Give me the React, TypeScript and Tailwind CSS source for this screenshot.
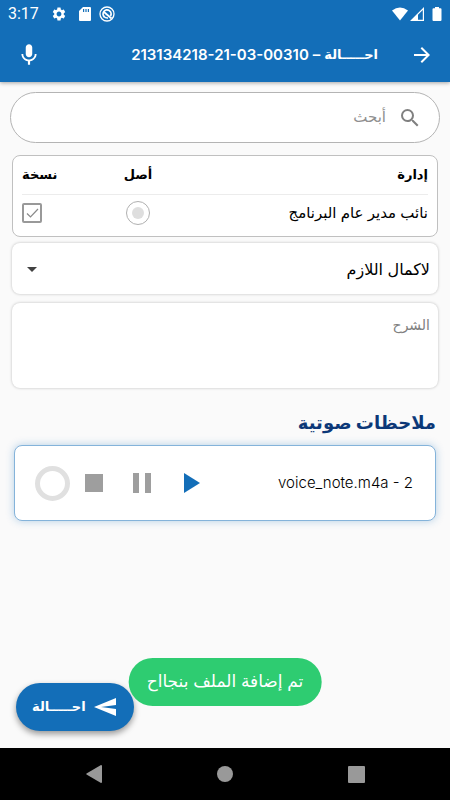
import React, { useState } from "react";
import {
  MdArrowDropDown,
  MdArrowForward,
  MdMic,
  MdSearch,
  MdSettings,
} from "react-icons/md";

const StatusBar = () => {
  return (
    <div
      dir="ltr"
      className="flex h-7 items-center justify-between px-2 font-[Roboto,sans-serif] text-white"
    >
      <div className="flex items-center gap-3">
        <span className="text-base">3:17</span>
        <MdSettings className="size-4" />
        <svg viewBox="0 0 12 14" className="h-3.5 w-3">
          <path
            fill="currentColor"
            fillRule="evenodd"
            d="M4 0H11Q12 0 12 1V13Q12 14 11 14H1Q0 14 0 13V4ZM4 2V5H5.2V2ZM6.4 2V5H7.6V2ZM8.8 2V5H10V2Z"
          />
        </svg>
        <svg viewBox="0 0 16 16" className="-ml-1 size-4" fill="none" stroke="currentColor">
          <circle cx="8" cy="8" r="7" strokeWidth="1.3" />
          <path d="M5.5 11A4 4 0 1 1 11.5 10" strokeWidth="1.8" />
          <path d="M5 6L12.5 12.5" strokeWidth="1.8" />
          <path d="M5 10.5Q6.5 12.2 9 12" strokeWidth="1.6" />
        </svg>
      </div>
      <div className="flex items-center">
        <svg viewBox="0 0 16 13" className="h-3.5 w-4">
          <path fill="currentColor" d="M0 3Q8 -3 16 3L8 13Z" />
        </svg>
        <svg viewBox="0 0 14 14" className="ml-0.5 size-3.5">
          <path fill="currentColor" fillRule="evenodd" d="M14 0V14H0ZM12.8 3V12.8H8V7.8Z" />
        </svg>
        <svg viewBox="0 0 9 14" className="ml-2 h-3.5 w-2.5">
          <path
            fill="currentColor"
            d="M2.5 0H6.5V1.3H8Q9 1.3 9 2.3V13Q9 14 8 14H1Q0 14 0 13V2.3Q0 1.3 1 1.3H2.5Z"
          />
        </svg>
      </div>
    </div>
  );
};

const Header = () => {
  return (
    <header className="relative bg-[#136eb8] text-white shadow-[0_1px_4px_rgba(0,0,0,0.35)]">
      <StatusBar />
      <div className="flex h-[54px] items-center justify-between px-4">
        <button type="button" aria-label="رجوع">
          <MdArrowForward className="size-6" />
        </button>
        <h1 className="flex flex-1 items-center gap-1 pr-8 text-[15px] font-semibold">
          <span className="text-[13px] font-bold">احـــــالة</span>
          <span>–</span>
          <span dir="ltr">213134218-21-03-00310</span>
        </h1>
        <button type="button" aria-label="تسجيل">
          <MdMic className="size-[26px]" />
        </button>
      </div>
    </header>
  );
};

const Search = () => {
  return (
    <label className="mx-2.5 mt-2.5 flex h-[51px] items-center gap-3 rounded-full border border-[#b4b4b4] bg-white px-[17px]">
      <MdSearch className="size-6 text-[#808080]" />
      <input
        type="search"
        placeholder="أبحث"
        aria-label="أبحث"
        className="min-w-0 flex-1 bg-transparent text-[15px] outline-none placeholder:text-[#8f8f8f]"
      />
    </label>
  );
};

const Departments = () => {
  return (
    <div className="mx-3 mt-3 rounded-lg border border-[#c0c0c0] bg-white px-[9px] pb-1">
      <table className="w-full">
        <thead>
          <tr className="h-[38px] border-b border-[#ececec] text-[13px]">
            <th className="text-right font-bold">إدارة</th>
            <th className="w-[60px] text-center font-bold">أصل</th>
            <th className="w-[86px] text-left font-bold">نسخة</th>
          </tr>
        </thead>
        <tbody>
          <tr className="h-[38px] text-[15px]">
            <td id="dep-1">نائب مدير عام البرنامج</td>
            <td>
              <input
                type="radio"
                name="original"
                aria-labelledby="dep-1"
                className="mx-auto block size-6 appearance-none rounded-full border border-[#b0b0b0] bg-[#dedede] p-[5px] [background-clip:content-box]"
              />
            </td>
            <td>
              <div className="mr-auto grid size-5">
                <input
                  type="checkbox"
                  defaultChecked
                  aria-labelledby="dep-1"
                  className="peer col-start-1 row-start-1 size-5 appearance-none rounded-xs border-2 border-[#999999]"
                />
                <svg
                  viewBox="0 0 20 20"
                  className="pointer-events-none invisible col-start-1 row-start-1 size-5 peer-checked:visible"
                >
                  <path d="M5 10.5L8.5 14L16 6" fill="none" stroke="#8a8a8a" strokeWidth="1.2" />
                </svg>
              </div>
            </td>
          </tr>
        </tbody>
      </table>
    </div>
  );
};

const ActionSelect = () => {
  return (
    <div className="mx-3 mt-1.5 grid items-center rounded-lg bg-white shadow-[0_0_3px_rgba(0,0,0,0.25)]">
      <select
        aria-label="الإجراء"
        className="col-start-1 row-start-1 h-[51px] w-full appearance-none rounded-lg bg-transparent px-2 text-base text-black"
      >
        <option>لاكمال اللازم</option>
      </select>
      <MdArrowDropDown className="pointer-events-none col-start-1 row-start-1 ml-2 size-6 justify-self-end text-[#424242]" />
    </div>
  );
};

const VoiceNote = () => {
  return (
    <div className="mx-3.5 mt-2 flex h-[76px] items-center justify-between rounded-lg border border-[#84b3da] bg-white px-5 shadow-[0_0_8px_rgba(19,110,184,0.3)]">
      <span dir="ltr" className="pr-0.5 text-[15px] font-light text-black">
        voice_note.m4a - 2
      </span>
      <div dir="ltr" className="flex items-center">
        <div className="size-[35px] rounded-full border-[5px] border-[#e0e0e0]" />
        <button type="button" aria-label="إيقاف" className="grid size-12 place-items-center">
          <span className="size-[18px] bg-[#9e9e9e]" />
        </button>
        <button type="button" aria-label="إيقاف مؤقت" className="grid size-12 place-items-center">
          <span className="h-5 w-[18px] border-x-6 border-[#9e9e9e]" />
        </button>
        <button type="button" aria-label="تشغيل" className="grid size-12 place-items-center">
          <svg viewBox="0 0 16 20" className="ml-1 h-5 w-4">
            <path d="M0 0L16 10L0 20Z" fill="#136eb8" />
          </svg>
        </button>
      </div>
    </div>
  );
};

const BottomNav = () => {
  return (
    <nav
      dir="ltr"
      className="flex h-[52px] items-center justify-around bg-black px-7 text-[#999999]"
    >
      <button type="button" aria-label="back">
        <svg viewBox="0 0 16 18" className="h-[18px] w-4">
          <path d="M15 0Q16 0 16 1V17Q16 18 15 18L0.5 9.5Q0 9 0.5 8.5Z" fill="currentColor" />
        </svg>
      </button>
      <button type="button" aria-label="home" className="size-4 rounded-full bg-[#999999]" />
      <button type="button" aria-label="recents" className="size-[17px] rounded-[1px] bg-[#999999]" />
    </nav>
  );
};

const App = () => {
  const [note, setNote] = useState("");

  return (
    <div
      dir="rtl"
      className="relative flex min-h-screen flex-col bg-[#fafafa] font-[Inter,'DejaVu_Sans',sans-serif] text-black"
    >
      <Header />

      <main className="flex-1">
        <Search />
        <Departments />
        <ActionSelect />
        <textarea
          value={note}
          onChange={(e) => setNote(e.target.value)}
          placeholder="الشرح"
          aria-label="الشرح"
          className="mx-3 mt-[9px] block h-[85px] w-[calc(100%-24px)] resize-none rounded-lg bg-white px-2 py-3 text-sm shadow-[0_0_3px_rgba(0,0,0,0.25)] outline-none placeholder:text-[#808080]"
        />
        <h2 className="mt-[21px] px-3.5 text-lg font-bold text-[#0c3878]">ملاحظات صوتية</h2>
        <VoiceNote />
      </main>

      <button
        type="button"
        className="absolute bottom-[69px] left-4 flex h-12 items-center gap-2 rounded-full bg-[#136eb8] pr-[18px] pl-4 text-[13px] font-bold text-white shadow-[0_3px_6px_rgba(0,0,0,0.4)]"
      >
        <svg viewBox="0 0 22 18" className="h-[18px] w-[22px]">
          <path d="M22 0V7L7 9L22 11V18L0 9Z" fill="currentColor" />
        </svg>
        احـــــالة
      </button>

      <div
        role="status"
        className="absolute bottom-[94px] left-1/2 flex h-12 -translate-x-1/2 items-center rounded-full bg-[#2ecc71] px-[18px] text-[17px] whitespace-nowrap text-white"
      >
        تم إضافة الملف بنجااح
      </div>

      <BottomNav />
    </div>
  );
};

export default App;
